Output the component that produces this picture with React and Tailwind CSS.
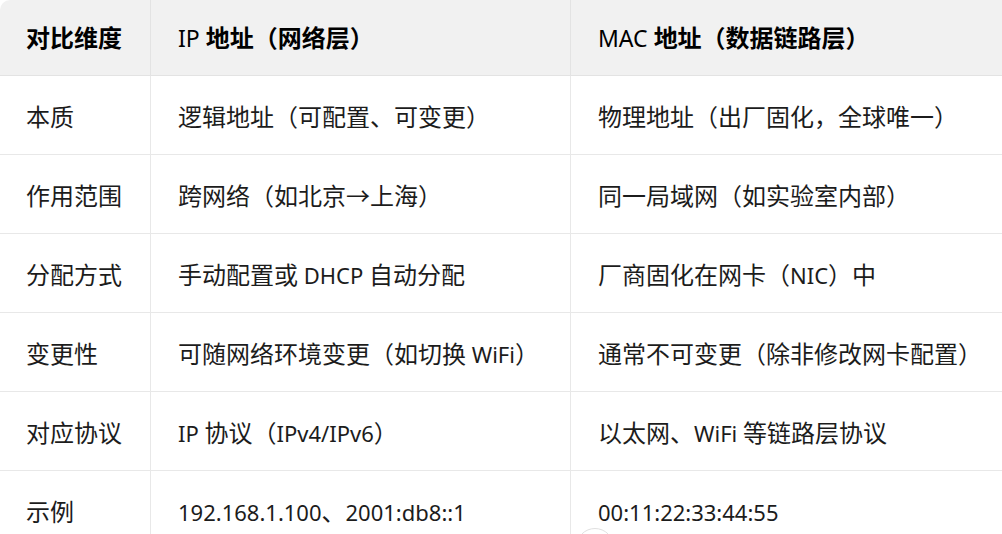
const rows = [
  ["本质", "逻辑地址（可配置、可变更）", "物理地址（出厂固化，全球唯一）"],
  ["作用范围", "跨网络（如北京→上海）", "同一局域网（如实验室内部）"],
  ["分配方式", "手动配置或 DHCP 自动分配", "厂商固化在网卡（NIC）中"],
  ["变更性", "可随网络环境变更（如切换 WiFi）", "通常不可变更（除非修改网卡配置）"],
  ["对应协议", "IP 协议（IPv4/IPv6）", "以太网、WiFi 等链路层协议"],
  ["示例", "192.168.1.100、2001:db8::1", "00:11:22:33:44:55"],
];

// latin runs are set a bit smaller than the CJK ones
const Mixed = ({ text, head }) => {
  const parts = text.split(/([\u0020-\u024F]+)/).filter(Boolean);
  return (
    <span>
      {parts.map((p, i) =>
        /^[\u0020-\u024F]+$/.test(p) ? (
          <span key={i} className={head ? "text-[23px] font-normal" : "text-[22px]"}>{p}</span>
        ) : (
          <span key={i}>{p}</span>
        )
      )}
    </span>
  );
};

const App = () => {
  return (
    <div
      className="relative w-[1002px] h-[534px] overflow-hidden bg-white text-[24px] text-[#1c1c1c]"
      style={{ fontFamily: '"Noto Sans", "Noto Sans CJK SC", sans-serif' }}
    >
      <div className="grid grid-cols-[151px_420px_1fr] h-[76px] bg-[#f1f1f1] border-b border-[#e3e3e3] rounded-tl-[10px] font-bold text-black">
        <div className="flex items-center pl-[26px] border-r border-[#e3e3e3]">对比维度</div>
        <div className="flex items-center pl-[27px] border-r border-[#e3e3e3]"><Mixed head text="IP 地址（网络层）" /></div>
        <div className="flex items-center pl-[27px]"><Mixed head text="MAC 地址（数据链路层）" /></div>
      </div>
      {rows.map((row, i) => (
        <div key={i} className="grid grid-cols-[151px_420px_1fr] h-[79px] border-b border-[#e8e8e8]">
          <div className="flex items-center pl-[26px] pt-[4px] border-r border-[#e8e8e8]"><Mixed text={row[0]} /></div>
          <div className="flex items-center pl-[27px] pt-[4px] border-r border-[#e8e8e8]"><Mixed text={row[1]} /></div>
          <div className="flex items-center pl-[27px] pt-[4px]"><Mixed text={row[2]} /></div>
        </div>
      ))}
      <div className="absolute left-[576px] top-[528px] w-[38px] h-[38px] rounded-full border border-[#e0e0e0] bg-white" />
    </div>
  );
};

export default App;
